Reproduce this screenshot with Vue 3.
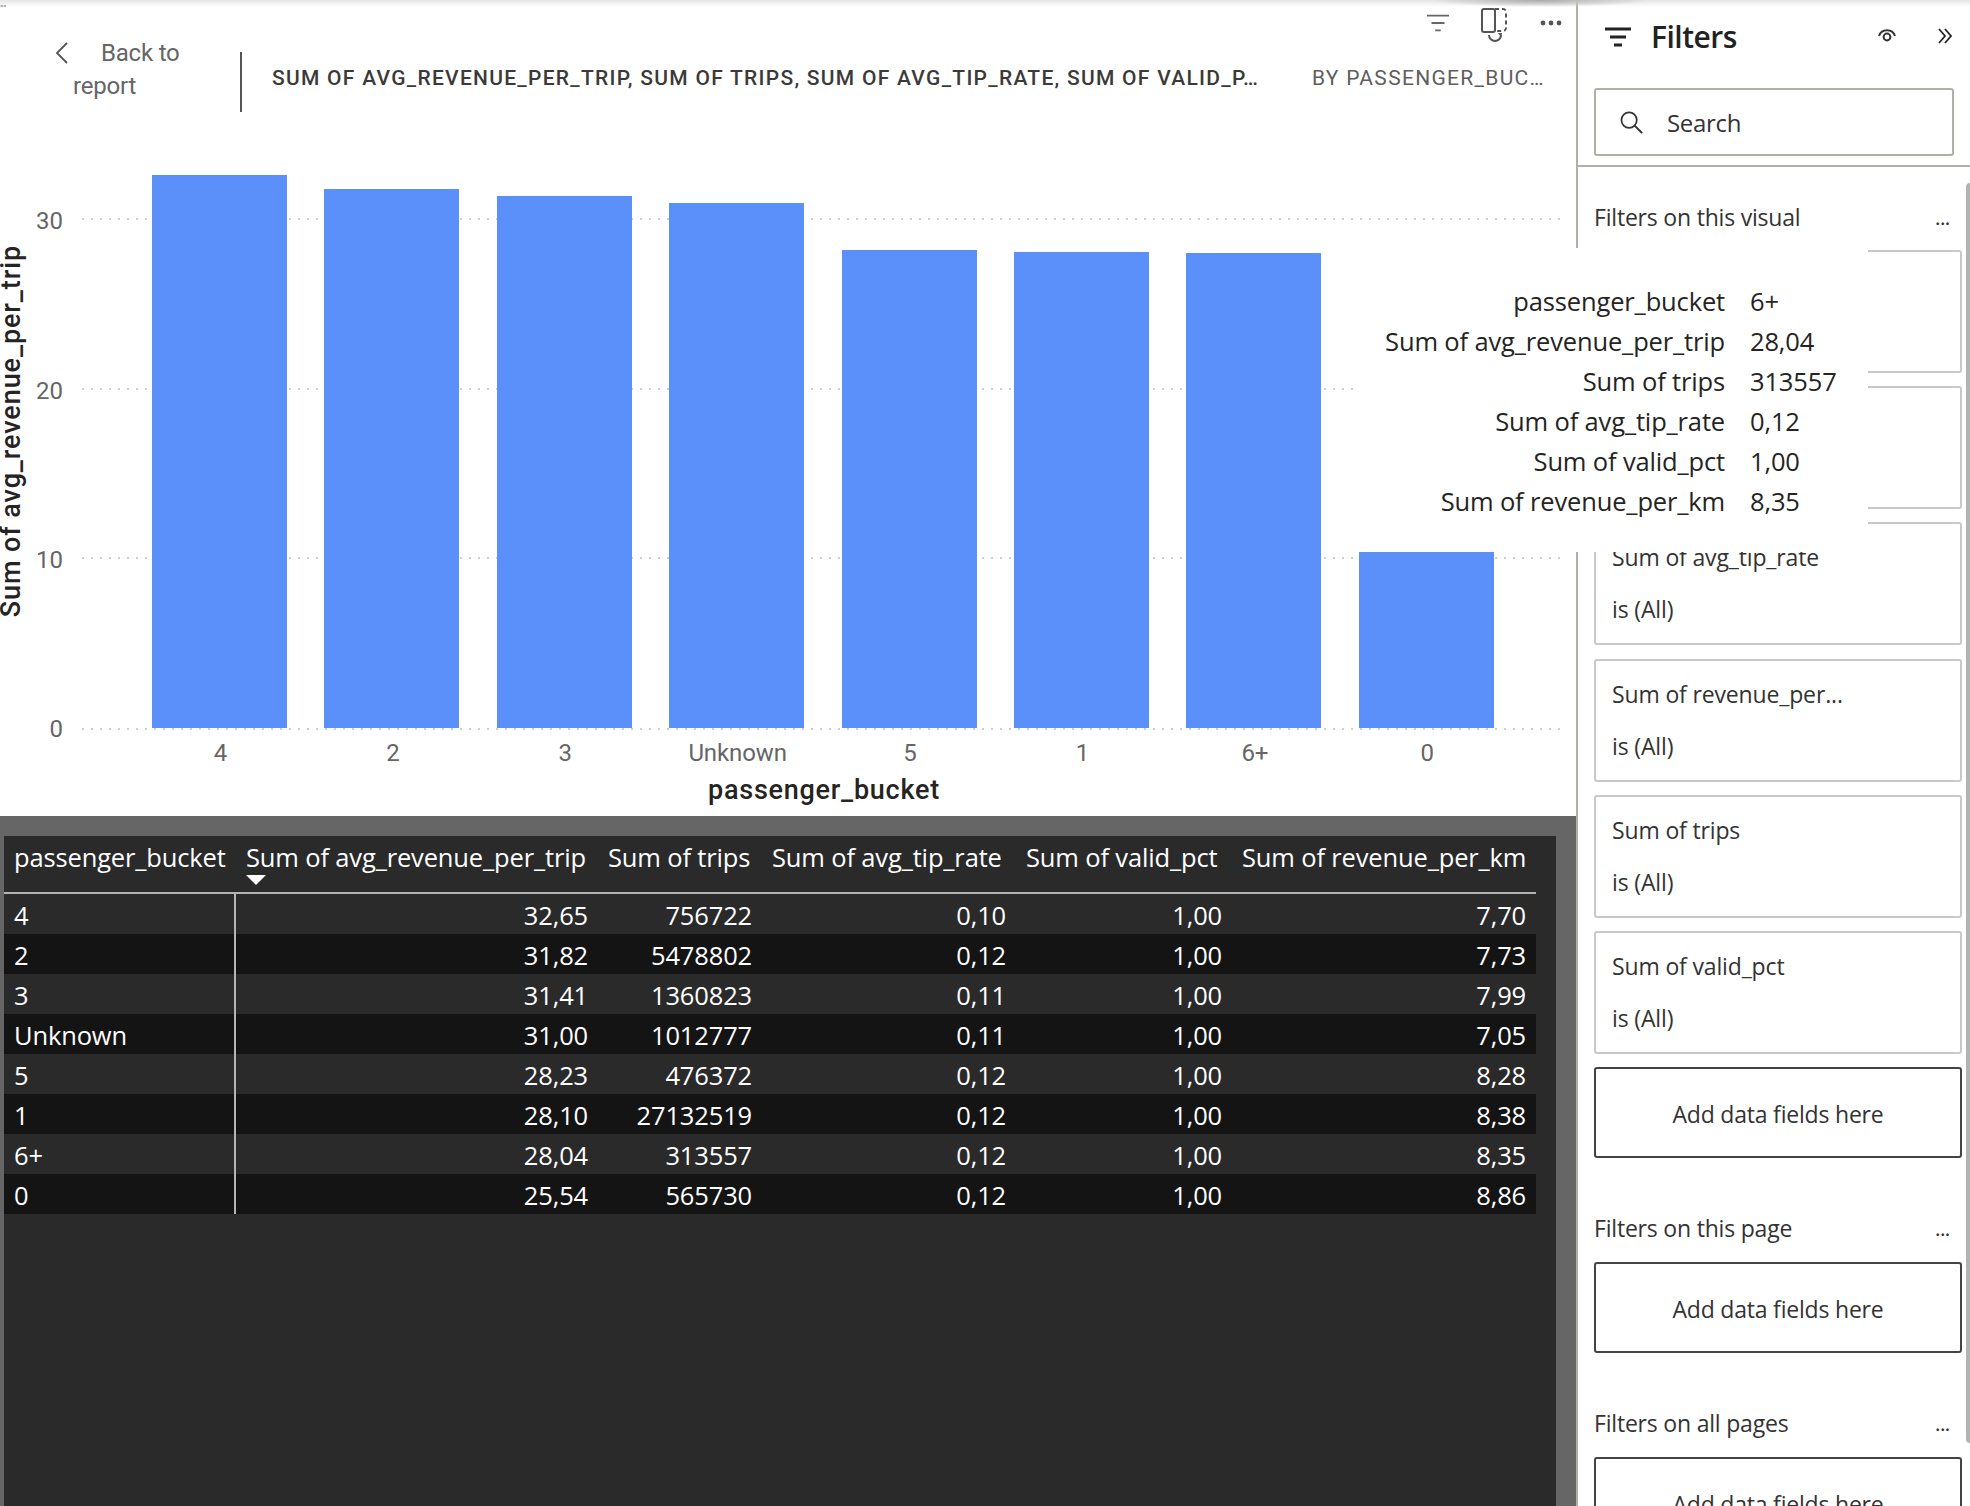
<script setup>
const bars = [
  { label: '4', value: 32.65 },
  { label: '2', value: 31.82 },
  { label: '3', value: 31.41 },
  { label: 'Unknown', value: 31.0 },
  { label: '5', value: 28.23 },
  { label: '1', value: 28.1 },
  { label: '6+', value: 28.04 },
  { label: '0', value: 25.54 }
]
const ticks = ['30', '20', '10', '0']
const headers = ['passenger_bucket', 'Sum of avg_revenue_per_trip', 'Sum of trips', 'Sum of avg_tip_rate', 'Sum of valid_pct', 'Sum of revenue_per_km']
const rows = [
  ['4', '32,65', '756722', '0,10', '1,00', '7,70'],
  ['2', '31,82', '5478802', '0,12', '1,00', '7,73'],
  ['3', '31,41', '1360823', '0,11', '1,00', '7,99'],
  ['Unknown', '31,00', '1012777', '0,11', '1,00', '7,05'],
  ['5', '28,23', '476372', '0,12', '1,00', '8,28'],
  ['1', '28,10', '27132519', '0,12', '1,00', '8,38'],
  ['6+', '28,04', '313557', '0,12', '1,00', '8,35'],
  ['0', '25,54', '565730', '0,12', '1,00', '8,86']
]
const tip = [
  ['passenger_bucket', '6+'],
  ['Sum of avg_revenue_per_trip', '28,04'],
  ['Sum of trips', '313557'],
  ['Sum of avg_tip_rate', '0,12'],
  ['Sum of valid_pct', '1,00'],
  ['Sum of revenue_per_km', '8,35']
]
const cards = ['passenger_bucket', 'Sum of avg_reven...', 'Sum of avg_tip_rate', 'Sum of revenue_per...', 'Sum of trips', 'Sum of valid_pct']
</script>

<template>
  <div class="app">
    <main class="main">
      <section class="chart">
        <header class="head">
          <svg class="chev" width="14" height="22" viewBox="0 0 14 22"><path d="M12 1 2 11l10 10" fill="none" stroke="#555" stroke-width="1.8"/></svg>
          <div class="back">Back to<br>report</div>
          <div class="vline"></div>
          <div class="title">SUM OF AVG_REVENUE_PER_TRIP, SUM OF TRIPS, SUM OF AVG_TIP_RATE, SUM OF VALID_P…</div>
          <div class="by">BY PASSENGER_BUC…</div>
        </header>
        <div class="toolbar">
          <svg class="t1" width="26" height="20" viewBox="0 0 26 20"><path d="M1 2h24M6 10h14M10 18h6" stroke="#666" stroke-width="2" fill="none"/></svg>
          <svg class="t2" width="26" height="34" viewBox="0 0 26 34"><rect x="1" y="1" width="13" height="23" rx="2" fill="none" stroke="#555" stroke-width="2"/><path d="M14 1h8a3 3 0 0 1 3 3v16a3 3 0 0 1-3 3h-8" fill="none" stroke="#555" stroke-width="2" stroke-dasharray="4 3"/><path d="M8 27a6 6 0 0 0 12 0" fill="none" stroke="#555" stroke-width="2"/><path d="M17 25l4 0-1 4z" fill="#555"/></svg>
          <svg class="t3" width="22" height="6" viewBox="0 0 22 6"><circle cx="3" cy="3" r="2.4" fill="#555"/><circle cx="11" cy="3" r="2.4" fill="#555"/><circle cx="19" cy="3" r="2.4" fill="#555"/></svg>
        </div>
        <div class="plotrow">
          <div class="ytitle">Sum of avg_revenue_per_trip</div>
          <div class="plot">
            <div class="grid">
              <div v-for="t in ticks" :key="t" class="tick"><span>{{ t }}</span><i></i></div>
            </div>
            <div class="bars">
              <div v-for="b in bars" :key="b.label" class="bar" :style="{ height: b.value * 16.95 + 'px' }"></div>
            </div>
          </div>
        </div>
        <div class="xlabels">
          <span v-for="b in bars" :key="b.label">{{ b.label }}</span>
        </div>
        <div class="xtitle">passenger_bucket</div>
      </section>
      <section class="well">
        <div class="table">
          <div class="trow thead">
            <div v-for="(h, i) in headers" :key="h" class="cell">
              {{ h }}
              <span v-if="i === 1" class="sort"></span>
            </div>
          </div>
          <div v-for="r in rows" :key="r[0]" class="trow tbody">
            <div v-for="(c, i) in r" :key="i" class="cell" :class="{ num: i > 0, lead: i === 0 }">{{ c }}</div>
          </div>
        </div>
      </section>
    </main>

    <aside class="side">
      <div class="fhead">
        <svg width="26" height="20" viewBox="0 0 26 20"><path d="M0 2h26M5 10h16M9 18h8" stroke="#222" stroke-width="3" fill="none"/></svg>
        <div class="ftitle">Filters</div>
        <svg class="eye" width="20" height="16" viewBox="0 0 20 16"><path d="M2 8a8.5 8.5 0 0 1 16 0" fill="none" stroke="#333" stroke-width="2"/><circle cx="10" cy="9" r="3.4" fill="none" stroke="#333" stroke-width="2"/></svg>
        <svg class="dbl" width="15" height="16" viewBox="0 0 15 16"><path d="M1 1l6 7-6 7M7 1l6 7-6 7" fill="none" stroke="#222" stroke-width="1.8"/></svg>
      </div>
      <div class="search">
        <svg width="23" height="23" viewBox="0 0 24 24"><circle cx="9.500" cy="9.500" r="8" fill="none" stroke="#333" stroke-width="1.800"/><path d="M15 15l8 8" stroke="#333" stroke-width="2"/></svg>
        <span>Search</span>
      </div>
      <div class="fbody">
        <div class="sechead top"><span>Filters on this visual</span><b>...</b></div>
        <div class="cards">
          <div v-for="c in cards" :key="c" class="card">
            <div>{{ c }}</div>
            <div>is (All)</div>
          </div>
          <div class="add">Add data fields here</div>
        </div>
        <div class="sechead"><span>Filters on this page</span><b>...</b></div>
        <div class="add">Add data fields here</div>
        <div class="sechead"><span>Filters on all pages</span><b>...</b></div>
        <div class="add">Add data fields here</div>
      </div>
      <div class="scroll"></div>
    </aside>

    <div class="tooltip">
      <template v-for="t in tip" :key="t[0]">
        <div class="tl">{{ t[0] }}</div>
        <div class="tv">{{ t[1] }}</div>
      </template>
    </div>
    <div class="shade"></div>
    <div class="dots">•••</div>
  </div>
</template>

<style scoped>
.app {
  position: relative;
  display: flex;
  width: 1970px;
  height: 1506px;
  overflow: hidden;
  background: #fff;
  font-family: "Open Sans", "Noto Sans", sans-serif;
  color: #252423;
}
.main { width: 1576px; flex: none; display: flex; flex-direction: column; }
.chart { position: relative; height: 816px; flex: none; }
.head { display: flex; align-items: flex-start; height: 175px; padding: 37px 0 0 55px; box-sizing: border-box; font-family: Roboto, sans-serif; }
.chev { margin-top: 5px; flex: none; }
.back { width: 100px; margin-left: 4px; text-indent: 28px; font-size: 24px; line-height: 33px; color: #666; white-space: nowrap; font-weight: 400; letter-spacing: -0.2px; }
.vline { width: 2px; height: 60px; margin: 15px 0 0 67px; background: #555; flex: none; }
.title { margin: 26px 0 0 30px; width: 1040px; flex: none; font-size: 21px; line-height: 30px; font-weight: 500; color: #3b3a39; letter-spacing: 1.27px; white-space: nowrap; }
.by { margin-top: 26px; font-size: 21px; line-height: 30px; color: #605e5c; letter-spacing: 1.3px; white-space: nowrap; }
.toolbar { position: absolute; top: 0; left: 1426px; width: 136px; height: 44px; }
.toolbar svg { position: absolute; }
.t1 { left: 0; top: 13px; width: 24px; }
.t2 { left: 55px; top: 8px; }
.t3 { left: 114px; top: 20px; }
.plotrow { display: flex; height: 553px; }
.ytitle { width: 30px; flex: none; margin: 0 0 41px -3px; align-self: center; writing-mode: vertical-rl; transform: rotate(180deg); font-family: Roboto, sans-serif; font-size: 27px; font-weight: 500; line-height: 28px; color: #252423; white-space: nowrap; letter-spacing: 0.9px; text-align: center; }
.plot { position: relative; width: 1535px; flex: none; margin-left: 3px; }
.grid { position: absolute; inset: 0; display: flex; flex-direction: column; justify-content: flex-end; }
.tick { height: 169.2px; flex: none; display: flex; align-items: flex-end; }
.tick:last-child { transform: translateY(2px); }
.tick span { width: 33px; margin-right: 19px; flex: none; text-align: right; font-family: Roboto, sans-serif; font-size: 24px; font-weight: 400; line-height: 28px; color: #666; transform: translateY(calc(50% + 1px)); }
.tick:last-child span { transform: translateY(calc(50% - 1px)); }
.tick i { flex: 1; height: 2px; background: repeating-linear-gradient(to right, #cfcfcf 0 2px, transparent 2px 9px); }
.bars { position: absolute; inset: 0; display: flex; align-items: flex-end; gap: 37.4px; padding-left: 122px; }
.bar { width: 135px; flex: none; background: #5b8ff9; }
.xlabels { display: flex; gap: 37.4px; padding-left: 153px; margin-top: 10px; height: 30px; }
.xlabels span { width: 135px; flex: none; text-align: center; font-family: Roboto, sans-serif; font-size: 24px; font-weight: 400; line-height: 30px; color: #666; letter-spacing: -0.1px; }
.xtitle { margin-top: 7px; padding-left: 143px; text-align: center; font-family: Roboto, sans-serif; font-size: 27px; font-weight: 500; line-height: 30px; width: 1505px; box-sizing: border-box; color: #252423; letter-spacing: 0.75px; }
.well { flex: 1; background: #666; padding: 20px 20px 0 4px; }
.table { height: 100%; background: #2a2a2a; color: #fff; font-size: 25.5px; }
.trow { display: grid; grid-template-columns: 232px 362px 164px 254px 216px 304px; width: 1532px; }
.thead { height: 56px; border-bottom: 2px solid #b3b3b3; }
.thead .cell { position: relative; padding: 5px 0 0 10px; line-height: 32px; white-space: nowrap; letter-spacing: -0.15px; }
.sort { position: absolute; left: 10px; top: 39px; width: 0; height: 0; border-left: 10px solid transparent; border-right: 10px solid transparent; border-top: 10px solid #fff; }
.tbody { height: 40px; background: #2a2a2a; }
.tbody:nth-child(odd) { background: #141414; }
.tbody .cell { padding: 0 10px; line-height: 43px; height: 40px; white-space: nowrap; letter-spacing: -0.15px; }
.num { text-align: right; }
.lead { border-right: 2px solid #b5b5b5; }
.side { position: relative; width: 394px; flex: none; border-left: 2px solid #b0b0a8; box-sizing: border-box; }
.fhead { display: flex; align-items: center; height: 74px; padding-left: 27px; }
.ftitle { margin-left: 20px; width: 90px; font-size: 30px; font-weight: 600; line-height: 40px; color: #222; letter-spacing: -0.5px; }
.eye { margin-left: 136px; margin-top: -2px; }
.dbl { margin-left: 41px; margin-top: -3px; }
.search { display: flex; align-items: center; width: 360px; height: 68px; margin: 14px 0 9px 16px; padding-left: 24px; box-sizing: border-box; border: 2px solid #b0b0a8; border-radius: 3px; font-size: 24px; color: #333; }
.search span { margin-left: 24px; letter-spacing: -0.3px; }
.fbody { border-top: 2px solid #b0b0a8; padding: 0 0 0 16px; height: 1400px; box-sizing: border-box; }
.sechead { display: flex; justify-content: space-between; width: 356px; height: 32px; margin: 54px 0 18px; font-size: 23px; line-height: 32px; color: #333; letter-spacing: -0.2px; white-space: nowrap; }
.sechead.top { margin: 34px 0 17px; }
.sechead b { font-weight: 600; font-size: 18px; line-height: 34px; color: #333; letter-spacing: 0; }
.cards { display: flex; flex-direction: column; gap: 13.2px; width: 368px; }
.card { height: 123px; box-sizing: border-box; padding: 17px 16px 0; border: 2px solid #c8c8c8; border-radius: 3px; font-size: 23px; line-height: 32px; color: #333; letter-spacing: -0.15px; }
.card div + div { margin-top: 20px; }
.add { width: 368px; height: 91px; box-sizing: border-box; display: flex; align-items: center; justify-content: center; padding-top: 2px; border: 2px solid #444; border-radius: 3px; font-size: 23px; color: #333; letter-spacing: -0.2px; }
.scroll { position: absolute; right: 0; top: 183px; width: 4px; height: 1260px; background: #b3b3b3; border-radius: 4px 0 0 4px; }
.tooltip { position: absolute; left: 1356px; top: 248px; width: 512px; height: 304px; box-sizing: border-box; padding-top: 33px; background: #fff; display: grid; grid-template-columns: 369px 1fr; grid-auto-rows: 40px; column-gap: 25px; font-size: 25.5px; line-height: 40px; color: #252423; letter-spacing: -0.15px; white-space: nowrap; }
.tl { text-align: right; }
.shade { position: absolute; left: 0; top: 0; width: 100%; height: 7px; background: radial-gradient(ellipse 110px 7px at 1540px 0, #aaa, rgba(255,255,255,0)), linear-gradient(#e4e4e4, rgba(255,255,255,0)); }
.dots { position: absolute; left: -2px; top: 0; font-size: 8px; line-height: 12px; color: #aaa; font-family: "Liberation Sans", sans-serif; }
</style>
